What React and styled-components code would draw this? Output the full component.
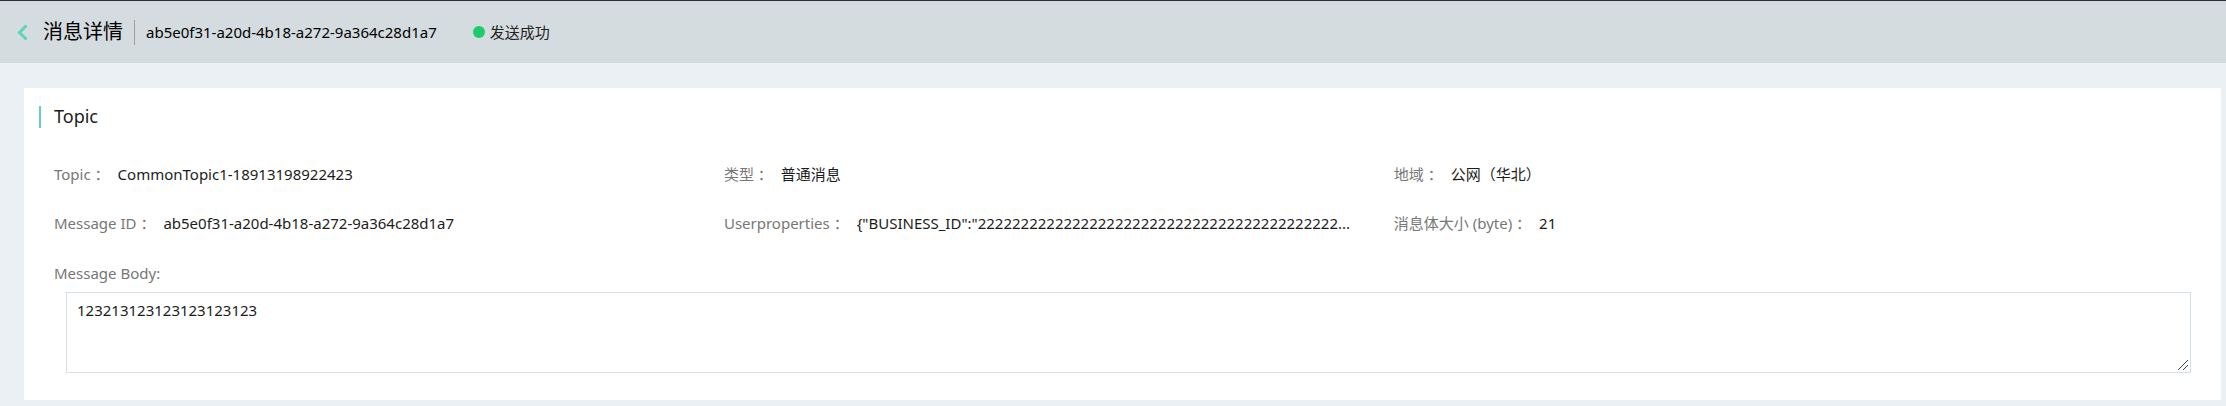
import React from "react";
import styled, { createGlobalStyle } from "styled-components";

const GlobalStyle = createGlobalStyle`
  * { box-sizing: border-box; }
  body {
    margin: 0;
    background: #eaf0f4;
    color: #1c1c1c;
    font-family: "Noto Sans", "Noto Sans CJK SC", sans-serif;
    font-size: 15px;
    line-height: 24px;
  }
`;

const Header = styled.header`
  display: flex;
  align-items: center;
  height: 63px;
  padding: 0 16px;
  border-top: 1px solid #2d2c3c;
  background: #d5dcdf;
  color: #000;
`;

const BackButton = styled.button`
  display: flex;
  margin: 0 15px 0 0;
  padding: 0;
  border: 0;
  background: none;
  cursor: pointer;
`;

const PageTitle = styled.h1`
  margin: 0;
  font-size: 20px;
  font-weight: 400;
  line-height: 24px;
`;

const Divider = styled.span`
  width: 1px;
  height: 25px;
  margin: 0 11px;
  background: #9b9fa2;
`;

const Status = styled.span`
  display: flex;
  align-items: center;
  gap: 5px;
  margin-left: 36px;
  color: #222;
`;

const StatusDot = styled.span`
  width: 12px;
  height: 12px;
  border-radius: 50%;
  background: #1ecb6b;
`;

const Card = styled.main`
  margin: 25px 5px 6px 24px;
  padding: 18px 30px 27px 15px;
  background: #fff;
`;

const CardTitle = styled.h2`
  height: 22px;
  margin: 0;
  padding-left: 13px;
  border-left: 2px solid #62d3b6;
  font-size: 18px;
  font-weight: 400;
  line-height: 20px;
`;

const Details = styled.dl`
  display: grid;
  grid-template-columns: repeat(3, minmax(0, 1fr));
  gap: 25px 32px;
  margin: 34px 7.4% 0 15px;
`;

const Detail = styled.div`
  display: flex;
`;

const Label = styled.dt`
  flex: none;
  margin-right: 8px;
  color: #777;
`;

const Value = styled.dd`
  margin: 0;
  overflow: hidden;
  text-overflow: ellipsis;
  white-space: nowrap;
`;

const BodyField = styled.div`
  display: flex;
  flex-direction: column;
  margin: 26px 0 0 15px;
`;

const BodyLabel = styled.label`
  color: #777;
`;

const BodyText = styled.textarea`
  height: 81px;
  margin: 7px 0 0 12px;
  padding: 5px 10px;
  border: 1px solid #d6e0e8;
  outline: none;
  background: #fff;
  color: #1c1c1c;
  font: inherit;
  resize: vertical;

  &::-webkit-resizer {
    background: url("data:image/svg+xml,%3Csvg xmlns='http://www.w3.org/2000/svg' width='15' height='15'%3E%3Cpath d='M3 13 13 3M8 13 13 8' stroke='%23444' fill='none'/%3E%3C/svg%3E") no-repeat right bottom;
  }
`;

const MESSAGE_ID = "ab5e0f31-a20d-4b18-a272-9a364c28d1a7";

const details = [
  ["Topic", "CommonTopic1-18913198922423"],
  ["类型", "普通消息"],
  ["地域", "公网（华北）"],
  ["Message ID", MESSAGE_ID],
  ["Userproperties", `{"BUSINESS_ID":"${"2".repeat(42)}...`],
  ["消息体大小 (byte)", "21"],
];

export default function App() {
  return (
    <>
      <GlobalStyle />
      <Header>
        <BackButton type="button" aria-label="返回">
          <svg width="12" height="18" viewBox="0 0 12 18" fill="none" stroke="#62d3b6" strokeWidth="3">
            <path d="M10.5 2.5 3.5 9.5 10.5 16.5" />
          </svg>
        </BackButton>
        <PageTitle>消息详情</PageTitle>
        <Divider />
        <span>{MESSAGE_ID}</span>
        <Status>
          <StatusDot />
          发送成功
        </Status>
      </Header>
      <Card>
        <CardTitle>Topic</CardTitle>
        <Details>
          {details.map(([label, value]) => (
            <Detail key={label}>
              <Label lang="zh-CN">{label} ：</Label>
              <Value lang="zh-CN">{value}</Value>
            </Detail>
          ))}
        </Details>
        <BodyField>
          <BodyLabel htmlFor="message-body">Message Body:</BodyLabel>
          <BodyText id="message-body" defaultValue="123213123123123123123" />
        </BodyField>
      </Card>
    </>
  );
}
